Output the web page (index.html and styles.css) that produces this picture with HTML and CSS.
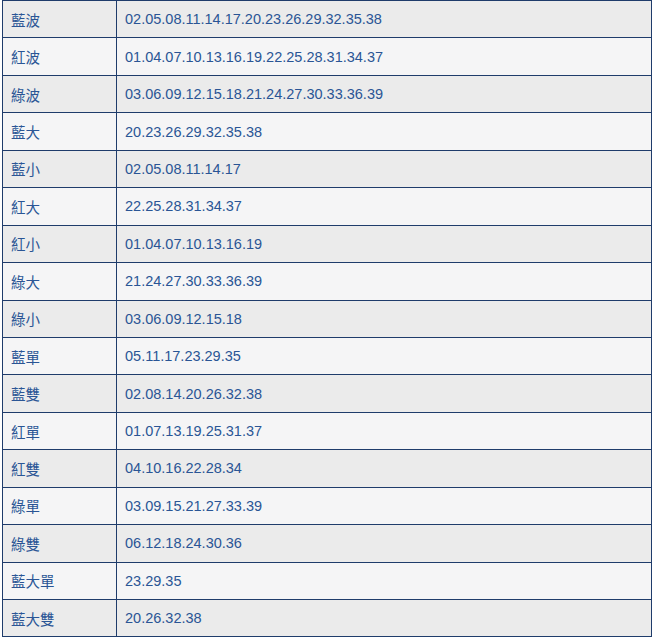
FILE: index.html
```html
<!DOCTYPE html>
<html>
<head>
<meta charset="utf-8">
<link rel="stylesheet" href="styles.css">
</head>
<body>
<table class="zodiac">
<tbody>
<tr><td class="label">藍波</td><td class="nums">02.05.08.11.14.17.20.23.26.29.32.35.38</td></tr>
<tr><td class="label">紅波</td><td class="nums">01.04.07.10.13.16.19.22.25.28.31.34.37</td></tr>
<tr><td class="label">綠波</td><td class="nums">03.06.09.12.15.18.21.24.27.30.33.36.39</td></tr>
<tr><td class="label">藍大</td><td class="nums">20.23.26.29.32.35.38</td></tr>
<tr><td class="label">藍小</td><td class="nums">02.05.08.11.14.17</td></tr>
<tr><td class="label">紅大</td><td class="nums">22.25.28.31.34.37</td></tr>
<tr><td class="label">紅小</td><td class="nums">01.04.07.10.13.16.19</td></tr>
<tr><td class="label">綠大</td><td class="nums">21.24.27.30.33.36.39</td></tr>
<tr><td class="label">綠小</td><td class="nums">03.06.09.12.15.18</td></tr>
<tr><td class="label">藍單</td><td class="nums">05.11.17.23.29.35</td></tr>
<tr><td class="label">藍雙</td><td class="nums">02.08.14.20.26.32.38</td></tr>
<tr><td class="label">紅單</td><td class="nums">01.07.13.19.25.31.37</td></tr>
<tr><td class="label">紅雙</td><td class="nums">04.10.16.22.28.34</td></tr>
<tr><td class="label">綠單</td><td class="nums">03.09.15.21.27.33.39</td></tr>
<tr><td class="label">綠雙</td><td class="nums">06.12.18.24.30.36</td></tr>
<tr><td class="label">藍大單</td><td class="nums">23.29.35</td></tr>
<tr><td class="label">藍大雙</td><td class="nums">20.26.32.38</td></tr>
</tbody>
</table>
</body>
</html>
```
FILE: styles.css
```css
html, body {
  margin: 0;
  padding: 0;
  background: #ffffff;
}
.zodiac {
  border-collapse: collapse;
  width: 650px;
  margin-left: 2px;
  table-layout: fixed;
  font-family: "Liberation Sans", Arial, "Noto Sans CJK TC", sans-serif;
  font-size: 14.5px;
  color: #2a5595;
}
.zodiac td {
  border: 1px solid #1f3c6b;
  height: 37.45px;
  padding: 0 0 0 8px;
  box-sizing: border-box;
  vertical-align: middle;
  white-space: nowrap;
}
.zodiac td.label {
  width: 114px;
}
.zodiac tr:nth-child(odd) td {
  background: #ebebeb;
}
.zodiac tr:nth-child(even) td {
  background: #f5f5f6;
}
```
